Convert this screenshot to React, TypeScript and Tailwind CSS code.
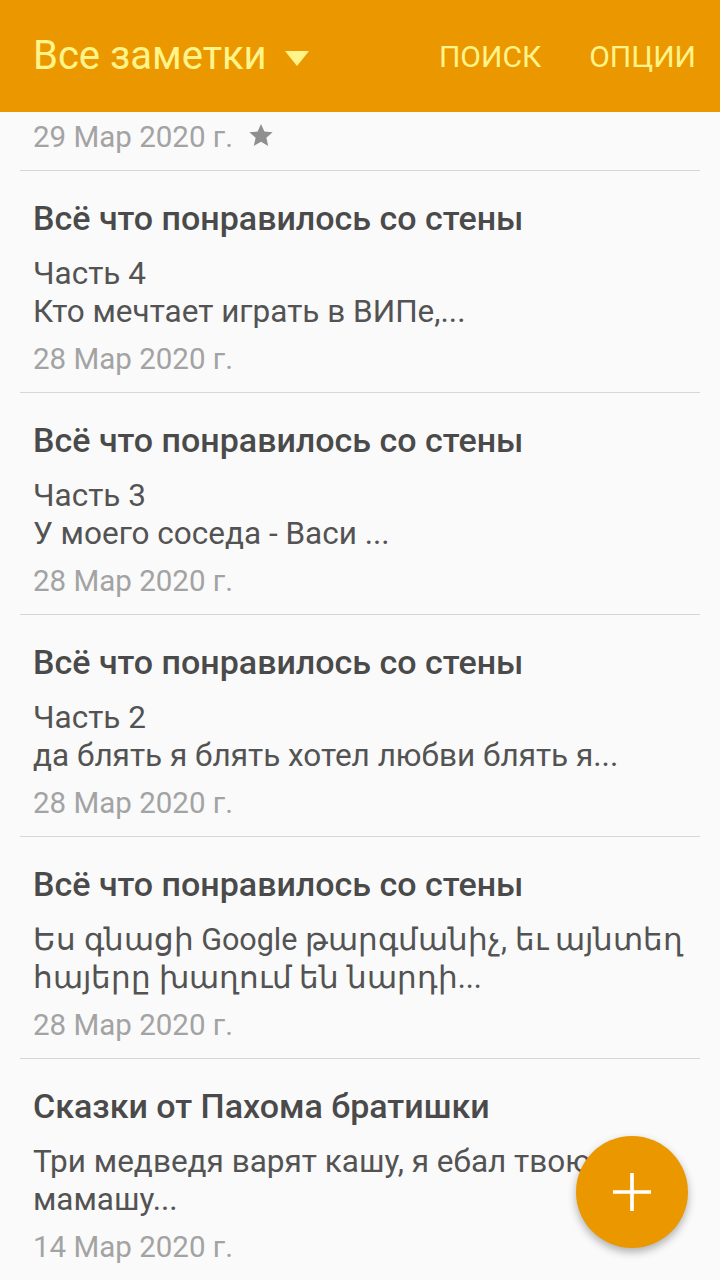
const notes = [
  {
    title: 'Всё что понравилось со стены',
    lines: ['Часть 4', 'Кто мечтает играть в ВИПе,...'],
    date: '28 Мар 2020 г.',
  },
  {
    title: 'Всё что понравилось со стены',
    lines: ['Часть 3', 'У моего соседа - Васи ...'],
    date: '28 Мар 2020 г.',
  },
  {
    title: 'Всё что понравилось со стены',
    lines: ['Часть 2', 'да блять я блять хотел любви блять я...'],
    date: '28 Мар 2020 г.',
  },
  {
    title: 'Всё что понравилось со стены',
    lines: ['Ես գնացի Google թարգմանիչ, եւ այնտեղ', 'հայերը խաղում են նարդի...'],
    date: '28 Мар 2020 г.',
    compact: true,
  },
  {
    title: 'Сказки от Пахома братишки',
    lines: ['Три медведя варят кашу, я ебал твою', 'мамашу...'],
    date: '14 Мар 2020 г.',
  },
];

type Note = {
  title: string;
  lines: string[];
  date: string;
  compact?: boolean;
};

const StarIcon = () => (
  <svg viewBox="0 0 24 24" className="h-[28px] w-[28px]" fill="#8f8f8f">
    <path d="M12 2.5l2.9 6.6 7.1.6-5.4 4.7 1.6 7-6.2-3.7-6.2 3.7 1.6-7L2 9.7l7.1-.6z" />
  </svg>
);

const NoteRow = ({ title, lines, date, compact }: Note) => (
  <div className="mx-[20px] flex h-[222px] flex-col border-b border-[#d6d6d6] px-[13px] pt-[27px]">
    <div className="text-[34px] leading-[40px] font-medium whitespace-nowrap text-[#4a4a4a]">{title}</div>
    <div
      className={
        compact
          ? 'mt-[17px] text-[30.5px] leading-[38px] text-[#535353]'
          : 'mt-[17px] text-[31.5px] leading-[38px] text-[#535353]'
      }
    >
      {lines.map((line) => (
        <div key={line} className="whitespace-nowrap">
          {line}
        </div>
      ))}
    </div>
    <div className="mt-[8px] text-[29.5px] leading-[40px] text-[#a3a3a3]">{date}</div>
  </div>
);

export default function App() {
  return (
    <div className="relative flex h-[1280px] w-[720px] flex-col overflow-hidden bg-[#fafafa] font-['Roboto',sans-serif]">
      <header className="flex h-[112px] shrink-0 items-center bg-[#eb9800] pr-[24px] pl-[33px]">
        <div className="flex items-center gap-[18px]">
          <span className="text-[40px] text-[#fff48a]">Все заметки</span>
          <svg viewBox="0 0 24 15" className="mt-[4px] h-[15px] w-[24px]" fill="#fff48a">
            <path d="M0 0h24L12 15z" />
          </svg>
        </div>
        <div className="ml-auto flex items-center gap-[48px] text-[30px] text-[#fff48a] uppercase">
          <span>Поиск</span>
          <span>Опции</span>
        </div>
      </header>

      <div className="flex-1 overflow-hidden">
        <div className="mx-[20px] flex h-[59px] items-start gap-[14px] border-b border-[#d6d6d6] px-[13px] pt-[5px]">
          <span className="text-[29.5px] leading-[40px] text-[#a3a3a3]">29 Мар 2020 г.</span>
          <div className="pt-[4px]">
            <StarIcon />
          </div>
        </div>
        {notes.map((note, index) => (
          <NoteRow key={index} {...note} />
        ))}
      </div>

      <button className="absolute right-[32px] bottom-[32px] flex h-[112px] w-[112px] items-center justify-center rounded-full bg-[#eb9800] shadow-[0_4px_8px_rgba(0,0,0,0.3)]">
        <svg viewBox="0 0 36 36" className="h-[38px] w-[38px]" stroke="#ffffff" strokeWidth="3.5">
          <path d="M18 0v36M0 18h36" />
        </svg>
      </button>
    </div>
  );
}
